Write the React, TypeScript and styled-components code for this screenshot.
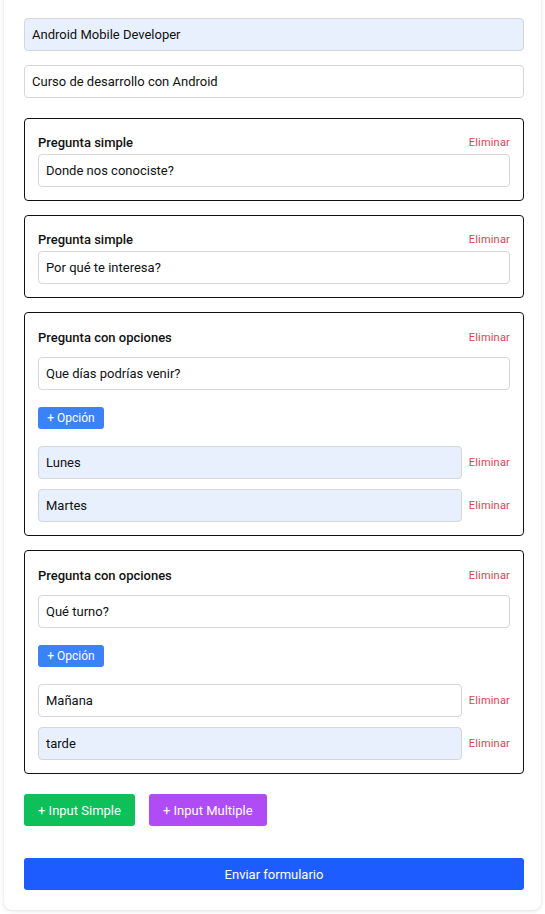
import React from "react";
import styled, { createGlobalStyle } from "styled-components";

const Global = createGlobalStyle`
  html, body { margin: 0; padding: 0; background: #ffffff; }
  body { font-family: "Roboto", "Noto Sans", sans-serif; color: #111; }
  * { box-sizing: border-box; }
`;

const Page = styled.div`
  padding: 0 4px 4px 4px;
  width: 545px;
  overflow: hidden;
`;

const Card = styled.form`
  margin-top: -12px;
  width: 537px;
  background: #fff;
  border-radius: 8px;
  box-shadow: 0 1px 4px rgba(0, 0, 0, 0.12), 0 0 1px rgba(0, 0, 0, 0.06);
  padding: 30px 17px 20px 20px;
  display: flex;
  flex-direction: column;
`;

const TextInput = styled.div<{ $filled?: boolean }>`
  height: 33px;
  flex: 1 0 auto;
  display: flex;
  align-items: center;
  padding: 0 7px;
  border: 1px solid #d4d6da;
  border-radius: 4px;
  background: ${(p) => (p.$filled ? "#e8f0fe" : "#ffffff")};
  font-size: 13px;
  color: #111;
  min-width: 0;
  white-space: nowrap;
`;

const Header = styled.div`
  display: flex;
  flex-direction: column;
  gap: 14px;
  margin-bottom: 20px;
`;

const Blocks = styled.div`
  display: flex;
  flex-direction: column;
  gap: 14px;
`;

const Block = styled.div`
  border: 1px solid #111;
  border-radius: 4px;
  padding: 13px;
  display: flex;
  flex-direction: column;
`;

const TitleRow = styled.div<{ $multi?: boolean }>`
  display: flex;
  justify-content: space-between;
  align-items: center;
  height: 20px;
  margin-top: ${(p) => (p.$multi ? "1px" : "0")};
  margin-bottom: ${(p) => (p.$multi ? "10px" : "2px")};
`;

const Title = styled.span`
  font-size: 13px;
  font-weight: 500;
  color: #111;
`;

const Remove = styled.span`
  font-size: 11px;
  color: #e03f52;
  letter-spacing: 0.2px;
`;

const SmallButton = styled.button`
  align-self: flex-start;
  height: 22px;
  width: 66px;
  padding: 0;
  border: none;
  border-radius: 3px;
  background: #3b82f6;
  color: #fff;
  font-family: inherit;
  font-size: 12px;
  margin: 17px 0;
`;

const Options = styled.div`
  display: flex;
  flex-direction: column;
  gap: 10px;
`;

const OptionRow = styled.div`
  display: flex;
  align-items: center;
  gap: 7px;
`;

const Actions = styled.div`
  display: flex;
  gap: 14px;
  margin-top: 20px;
`;

const ActionButton = styled.button<{ $color: string }>`
  height: 32px;
  padding: 0 14px;
  border: none;
  border-radius: 3px;
  background: ${(p) => p.$color};
  color: #fff;
  font-family: inherit;
  font-size: 13px;
`;

const Submit = styled.button`
  margin-top: 32px;
  height: 32px;
  border: none;
  border-radius: 3px;
  background: #1d5cff;
  color: #fff;
  font-family: inherit;
  font-size: 13px;
`;

type Q =
  | { kind: "simple"; text: string }
  | { kind: "multi"; text: string; options: { label: string; filled: boolean }[] };

const questions: Q[] = [
  { kind: "simple", text: "Donde nos conociste?" },
  { kind: "simple", text: "Por qué te interesa?" },
  {
    kind: "multi",
    text: "Que días podrías venir?",
    options: [
      { label: "Lunes", filled: true },
      { label: "Martes", filled: true },
    ],
  },
  {
    kind: "multi",
    text: "Qué turno?",
    options: [
      { label: "Mañana", filled: false },
      { label: "tarde", filled: true },
    ],
  },
];

export default function App() {
  return (
    <Page>
      <Global />
      <Card onSubmit={(e) => e.preventDefault()}>
        <Header>
          <TextInput $filled>Android Mobile Developer</TextInput>
          <TextInput>Curso de desarrollo con Android</TextInput>
        </Header>
        <Blocks>
          {questions.map((q, i) => (
            <Block key={i}>
              <TitleRow $multi={q.kind === "multi"}>
                <Title>{q.kind === "simple" ? "Pregunta simple" : "Pregunta con opciones"}</Title>
                <Remove>Eliminar</Remove>
              </TitleRow>
              <TextInput>{q.text}</TextInput>
              {q.kind === "multi" && (
                <>
                  <SmallButton type="button">+ Opción</SmallButton>
                  <Options>
                    {q.options.map((o) => (
                      <OptionRow key={o.label}>
                        <TextInput $filled={o.filled}>{o.label}</TextInput>
                        <Remove>Eliminar</Remove>
                      </OptionRow>
                    ))}
                  </Options>
                </>
              )}
            </Block>
          ))}
        </Blocks>
        <Actions>
          <ActionButton type="button" $color="#0dc05a">+ Input Simple</ActionButton>
          <ActionButton type="button" $color="#b04cf6">+ Input Multiple</ActionButton>
        </Actions>
        <Submit type="submit">Enviar formulario</Submit>
      </Card>
    </Page>
  );
}
